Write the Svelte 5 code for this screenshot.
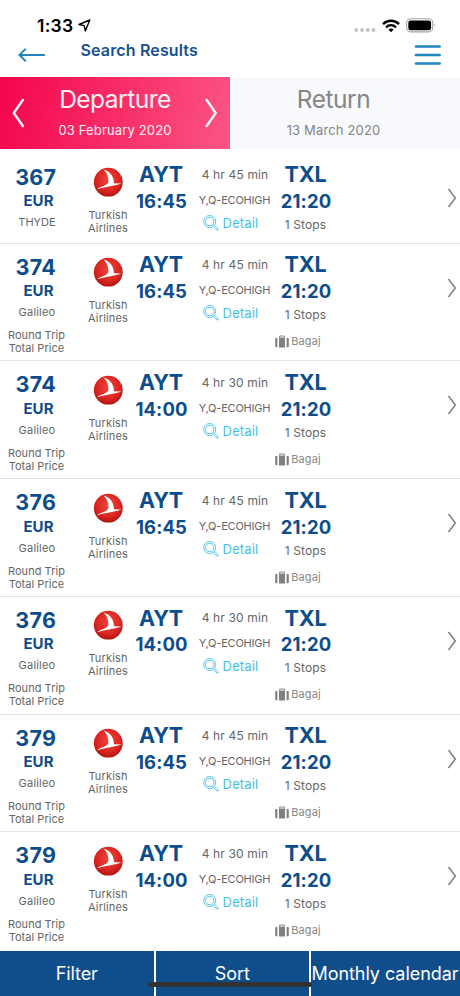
<script lang="ts">
  interface Flight {
    price: number;
    provider: string;
    departs: string;
    duration: string;
    roundTrip: boolean;
  }

  const flights: Flight[] = [
    { price: 367, provider: 'THYDE', departs: '16:45', duration: '4 hr 45 min', roundTrip: false },
    { price: 374, provider: 'Galileo', departs: '16:45', duration: '4 hr 45 min', roundTrip: true },
    { price: 374, provider: 'Galileo', departs: '14:00', duration: '4 hr 30 min', roundTrip: true },
    { price: 376, provider: 'Galileo', departs: '16:45', duration: '4 hr 45 min', roundTrip: true },
    { price: 376, provider: 'Galileo', departs: '14:00', duration: '4 hr 30 min', roundTrip: true },
    { price: 379, provider: 'Galileo', departs: '16:45', duration: '4 hr 45 min', roundTrip: true },
    { price: 379, provider: 'Galileo', departs: '14:00', duration: '4 hr 30 min', roundTrip: true }
  ];

  let activeTab = $state('departure');
</script>

<div class="screen">
  <div class="status-bar">
    <span class="clock">1:33</span>
    <svg class="location" width="13" height="13" viewBox="0 0 13 13">
      <path d="M11.8 1 1 5.5 6.2 6.6 7.3 11.9Z" fill="none" stroke="#000" stroke-width="1.4" stroke-linejoin="round" />
    </svg>
    <svg class="cell" width="22" height="4" viewBox="0 0 22 4" fill="#c2c2c2">
      <circle cx="2.3" cy="2" r="1.9" />
      <circle cx="8" cy="2" r="1.9" />
      <circle cx="13.8" cy="2" r="1.9" />
      <circle cx="19.5" cy="2" r="1.9" />
    </svg>
    <svg class="wifi" width="18" height="14" viewBox="0 0 18 14" fill="none" stroke="#000" stroke-width="2.4">
      <path d="M1 5.1C5.5.7 12.5.7 17 5.1" />
      <path d="M4 8.3C7 5.6 11 5.6 14 8.3" />
      <path d="M6.4 10.5C8 9.2 10 9.2 11.6 10.5L9 13.3Z" fill="#000" stroke="none" />
    </svg>
    <svg class="battery" width="30" height="15" viewBox="0 0 30 15">
      <rect x=".7" y=".7" width="26" height="13.2" rx="4" fill="#fff" stroke="#a5a5a5" stroke-width="1.1" />
      <rect x="2.3" y="2.4" width="22.8" height="9.8" rx="2.3" fill="#000" />
      <path d="M28 5.2Q29.6 7.2 28 9.4Z" fill="#999" />
    </svg>
  </div>

  <header>
    <button class="back" aria-label="Back">
      <svg width="28" height="14" viewBox="0 0 28 14" fill="none" stroke="#2185c0" stroke-width="1.9" stroke-linecap="round">
        <path d="M26.3 7H1.5M7.3 1.3 1.3 7 7.3 12.7" />
      </svg>
    </button>
    <h1>Search Results</h1>
    <button class="menu" aria-label="Menu">
      <svg width="28" height="22" viewBox="0 0 28 22" stroke="#2185c0" stroke-width="2.7" stroke-linecap="round">
        <path d="M2 2.5H25.6M2 11H25.6M2 19.5H25.6" />
      </svg>
    </button>
  </header>

  <nav class="tabs">
    <button class="tab" class:active={activeTab === 'departure'} onclick={() => (activeTab = 'departure')}>
      <svg width="14" height="30" viewBox="0 0 14 30"><path d="M11.8 2 2.8 15 11.8 28" /></svg>
      <span class="tab-text">
        <span class="tab-title">Departure</span>
        <span class="tab-date">03 February 2020</span>
      </span>
      <svg width="14" height="30" viewBox="0 0 14 30"><path d="M2.7 2 11.7 15 2.7 28" /></svg>
    </button>
    <button class="tab" class:active={activeTab === 'return'} onclick={() => (activeTab = 'return')}>
      <span class="tab-text">
        <span class="tab-title">Return</span>
        <span class="tab-date">13 March 2020</span>
      </span>
    </button>
  </nav>

  <main>
    {#each flights as flight}
      <article class="flight" class:short={!flight.roundTrip}>
        <div class="col fare">
          <span class="price">{flight.price}</span>
          <span class="currency">EUR</span>
          <span class="provider" class:upper={!flight.roundTrip}>{flight.provider}</span>
          {#if flight.roundTrip}
            <span class="note">Round Trip<br />Total Price</span>
          {/if}
        </div>
        <div class="col airline">
          <svg width="30" height="30" viewBox="0 0 30 30">
            <defs>
              <radialGradient id="ball" cx=".5" cy=".4" r=".62">
                <stop offset="0" stop-color="#f0453c" />
                <stop offset=".65" stop-color="#dc2622" />
                <stop offset="1" stop-color="#a9140f" />
              </radialGradient>
            </defs>
            <circle cx="15.3" cy="15.2" r="14.4" fill="url(#ball)" />
            <path d="M10.5 2.6C17.5 4.5 20.8 10 21 16.2L28.8 16.4C22 18.9 13.5 19.4 3.8 22.2C9 18.6 15.2 18.6 15.4 14.2C15.5 10 14 5.8 10.5 2.6Z" fill="#fff" />
          </svg>
          <span class="airline-name">Turkish<br />Airlines</span>
        </div>
        <div class="col">
          <span class="airport">AYT</span>
          <span class="time">{flight.departs}</span>
        </div>
        <div class="col info">
          <span class="duration">{flight.duration}</span>
          <span class="fare-class">Y,Q-ECOHIGH</span>
          <span class="detail">
            <svg width="16" height="16" viewBox="0 0 16 16" fill="none" stroke="#43bfe9" stroke-width=".9">
              <circle cx="6.7" cy="6.5" r="6" />
              <circle cx="6.7" cy="6.5" r="4.2" />
              <path d="M10.2 11.2 14 15.1Q15.2 15.4 15.3 14L11.3 10.1" />
            </svg>
            Detail
          </span>
        </div>
        <div class="col">
          <span class="airport">TXL</span>
          <span class="time">21:20</span>
          <span class="stops">1 Stops</span>
          {#if flight.roundTrip}
            <span class="baggage">
              <svg width="14" height="13" viewBox="0 0 14 13" fill="#808080">
                <path d="M.2 4Q.2 3 1 3H2.4V12.3H1Q.2 12.3.2 11.3ZM11.6 3H13Q13.8 3 13.8 4V11.3Q13.8 12.3 13 12.3H11.6ZM4 2.6H10V12.6H4Z" />
                <path d="M4.6 2.6V1H9.4V2.6" fill="none" stroke="#808080" stroke-width=".9" />
              </svg>
              Bagaj
            </span>
          {/if}
        </div>
        <svg class="chevron" width="10" height="20" viewBox="0 0 10 20">
          <path d="M1.5 1 8.3 10 1.5 19" fill="none" stroke="#858585" stroke-width="1.6" />
        </svg>
      </article>
    {/each}
  </main>

  <footer>
    <button>Filter</button>
    <button>Sort</button>
    <button class="wide">Monthly calendar</button>
    <div class="home-indicator"></div>
  </footer>
</div>

<style>
  :global(body) {
    background: #fff;
  }

  .screen {
    display: flex;
    flex-direction: column;
    width: 460px;
    height: 996px;
    overflow: hidden;
    background: #fff;
    color: #666;
    font-family: Inter, 'Liberation Sans', sans-serif;
  }

  button {
    padding: 0;
    border: 0;
    background: none;
    color: inherit;
    font: inherit;
    cursor: pointer;
  }

  svg {
    display: block;
    flex: none;
  }

  .status-bar {
    display: flex;
    align-items: center;
    height: 27px;
    padding: 12px 24px 0 37px;
    color: #000;
  }

  .clock {
    width: 36px;
    font-size: 17.5px;
    font-weight: 600;
    letter-spacing: 0.3px;
  }

  .location {
    margin-left: 5px;
  }

  .cell {
    margin: 9px 6px 0 auto;
  }

  .wifi {
    margin-right: 6px;
  }

  header {
    display: flex;
    align-items: flex-start;
    height: 38px;
    padding: 0 18px;
  }

  .back {
    margin-top: 9px;
  }

  h1 {
    flex: 1;
    margin: 1px 0 0 34.5px;
    color: #17518f;
    font-size: 16px;
    font-weight: 600;
    line-height: 20px;
    letter-spacing: 0.15px;
  }

  .menu {
    margin-top: 5px;
  }

  .tabs {
    display: grid;
    grid-template-columns: 1fr 1fr;
    height: 72px;
  }

  .tab {
    display: flex;
    align-items: center;
    justify-content: center;
    padding: 0 12px 0 11px;
    background: #f7f9fd;
    color: #858585;
  }

  .tab:last-child {
    padding: 0 24px 0 0;
  }

  .tab.active {
    justify-content: space-between;
    background: linear-gradient(100deg, #f3054b, #fb5584);
    color: #fff0f4;
  }

  .tab svg {
    fill: none;
    stroke: #fff;
    stroke-width: 2.3;
    stroke-linecap: round;
  }

  .tab-text {
    display: flex;
    flex-direction: column;
    align-items: center;
  }

  .tab-title {
    margin: -3px 0 0 1px;
    font-size: 24.5px;
    line-height: 32px;
    letter-spacing: -0.5px;
  }

  .tab-date {
    margin: 5px 0 0 1px;
    font-size: 13px;
    line-height: 20px;
    letter-spacing: 0.15px;
  }

  main {
    height: 802px;
    padding-top: 4.5px;
    box-sizing: border-box;
    overflow: hidden;
  }

  .flight {
    display: grid;
    grid-template-columns: 84px 48px 58px 90px 51px 1fr;
    height: 117.8px;
    box-sizing: border-box;
    border-bottom: 1px solid #e3e3e3;
  }

  .flight.short {
    height: 90px;
  }

  .flight:last-child {
    border-bottom: 0;
  }

  .col {
    display: flex;
    flex-direction: column;
    align-items: center;
    padding-top: 8.7px;
    white-space: nowrap;
  }

  .fare {
    padding: 11px 11px 0 0;
  }

  .price {
    margin: 0 1.5px 0.5px 0;
    color: #0e4d8b;
    font-size: 21.5px;
    font-weight: 700;
    line-height: 24px;
    letter-spacing: 0.3px;
  }

  .currency {
    margin-left: 4px;
    color: #0e4d8b;
    font-size: 15px;
    font-weight: 700;
    line-height: 23px;
    letter-spacing: 0.1px;
  }

  .provider {
    margin-left: 1px;
    font-size: 11px;
    line-height: 20px;
    letter-spacing: 0.2px;
  }

  .provider.upper {
    letter-spacing: 0;
  }

  .note {
    margin-top: 7px;
    font-size: 11px;
    line-height: 13px;
    letter-spacing: 0.05px;
    text-align: center;
  }

  .airline {
    padding-top: 13.5px;
  }

  .airline-name {
    margin-top: 12px;
    font-size: 11px;
    line-height: 13px;
    letter-spacing: 0.15px;
    text-align: center;
  }

  .airport {
    color: #0e4d8b;
    font-size: 21.5px;
    font-weight: 700;
    line-height: 25px;
    letter-spacing: -0.2px;
  }

  .time {
    margin: 0.8px 0 0 1px;
    color: #0e4d8b;
    font-size: 18.5px;
    font-weight: 700;
    line-height: 26px;
    letter-spacing: 0.1px;
  }

  .info {
    padding-top: 9.5px;
  }

  .duration {
    font-size: 12px;
    line-height: 24px;
    letter-spacing: 0.15px;
  }

  .fare-class {
    margin-left: -1px;
    font-size: 11px;
    line-height: 26px;
    letter-spacing: -0.2px;
  }

  .detail {
    display: flex;
    align-items: center;
    gap: 4px;
    margin-left: -9px;
    color: #43bfe9;
    font-size: 13px;
    line-height: 20px;
    letter-spacing: 0.15px;
  }

  .stops {
    font-size: 12px;
    line-height: 21px;
    letter-spacing: 0.15px;
  }

  .baggage {
    display: flex;
    align-items: center;
    gap: 2px;
    margin: 8px 15px 0 0;
    color: #888;
    font-size: 11px;
    line-height: 17px;
    letter-spacing: 0.15px;
  }

  .chevron {
    justify-self: end;
    margin: 34px 3px 0 0;
  }

  footer {
    position: relative;
    display: grid;
    grid-template-columns: 153.5px 153.5px 1fr;
    column-gap: 2px;
    height: 45px;
    background: #fff;
  }

  footer button {
    background: #0f4e8b;
    color: #fff;
    font-size: 18px;
    letter-spacing: -0.1px;
    white-space: nowrap;
  }

  footer .wide {
    padding-right: 1px;
    letter-spacing: -0.05px;
  }

  .home-indicator {
    position: absolute;
    left: 148px;
    top: 30.5px;
    width: 164px;
    height: 5px;
    border-radius: 3px;
    background: #333;
  }
</style>
